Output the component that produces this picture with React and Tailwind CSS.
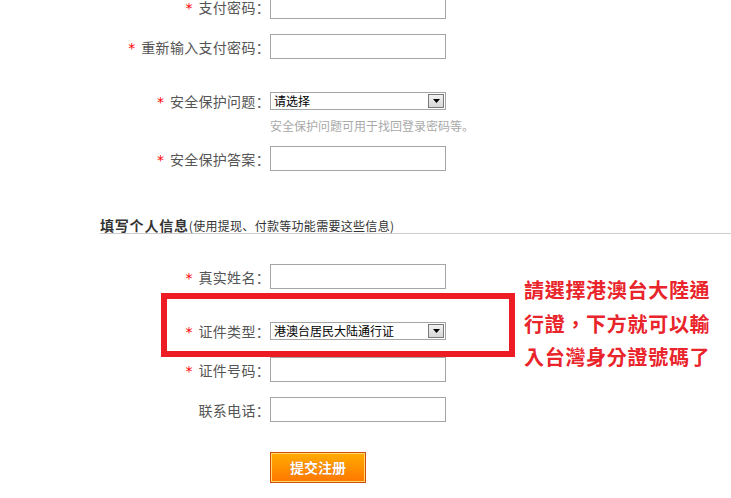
import React from "react";

const FONT = { fontFamily: '"Noto Sans CJK SC", "Noto Sans", sans-serif' };

function Label({ text, req = true }) {
  return (
    <div className="w-[270px] flex justify-end items-center text-[14px] leading-[18px] text-[#555]">
      {req && <span className="text-[#ff0000] mr-[6px] relative top-[1px]" style={{ fontFamily: '"DejaVu Sans", sans-serif' }}>*</span>}
      <span className="tracking-[0.3px]">{text}：</span>
    </div>
  );
}

function Input() {
  return <div className="w-[176px] h-[25px] border border-[#a5a5a5] bg-white" />;
}

function Select({ value }) {
  return (
    <div className="w-[176px] h-[18px] border border-[#a5a5a5] bg-white flex items-center">
      <div className="flex-1 pl-[3px] text-[12px] leading-[16px] text-black whitespace-nowrap">{value}</div>
      <div className="w-[16px] h-[14px] mr-[1px] border border-[#7a7a7a] bg-gradient-to-b from-[#f2f2f2] to-[#d6d6d6] flex items-center justify-center">
        <svg width="7" height="4" viewBox="0 0 7 4"><path d="M0 0h7L3.5 4z" fill="#000" /></svg>
      </div>
    </div>
  );
}

export default function App() {
  return (
    <div className="relative w-[731px] h-[498px] overflow-hidden bg-white" style={FONT}>
      <div className="flex flex-col">
        <div className="flex items-center mt-[-6px]">
          <Label text="支付密码" />
          <Input />
        </div>
        <div className="flex items-center mt-[15px]">
          <Label text="重新输入支付密码" />
          <Input />
        </div>
        <div className="flex items-center mt-[33px]">
          <Label text="安全保护问题" />
          <Select value="请选择" />
        </div>
        <div className="ml-[270px] mt-[8px] text-[12px] leading-[16px] text-[#aaaaaa]">安全保护问题可用于找回登录密码等。</div>
        <div className="flex items-center mt-[12px]">
          <Label text="安全保护答案" />
          <Input />
        </div>
        <div className="ml-[100px] mt-[48px] border-b border-[#cccccc] flex items-end h-[15px]">
          <span className="text-[14px] leading-[15px] font-bold text-[#333] tracking-[0.8px]">填写个人信息</span>
          <span className="text-[12px] leading-[14px] text-[#333] tracking-[0.3px]">(使用提现、付款等功能需要这些信息)</span>
        </div>
        <div className="flex items-center mt-[30px]">
          <Label text="真实姓名" />
          <Input />
        </div>
        <div className="flex items-center mt-[33px]">
          <Label text="证件类型" />
          <Select value="港澳台居民大陆通行证" />
        </div>
        <div className="flex items-center mt-[17px]">
          <Label text="证件号码" />
          <Input />
        </div>
        <div className="flex items-center mt-[15px]">
          <Label text="联系电话" req={false} />
          <Input />
        </div>
        <div className="ml-[270px] mt-[30px] w-[96px] h-[31px] border border-[#cf4f0a]">
          <div className="w-full h-full border border-[#ffd970] bg-gradient-to-b from-[#ffaa00] to-[#ff7800] flex items-center justify-center text-white font-bold text-[14px] [text-shadow:0_0_1px_#c85a00]">
            提交注册
          </div>
        </div>
      </div>

      <div className="absolute left-[161px] top-[293px] w-[354px] h-[64px] border-[6px] border-[#ed1c24]" />
      <div
        className="absolute left-[524px] top-[273px] text-[20px] leading-[33.5px] font-bold text-[#e9242b] tracking-[0.7px] whitespace-nowrap"
        style={{ fontFamily: '"Noto Sans CJK TC", "Noto Sans CJK SC", sans-serif' }}
      >
        <div>請選擇港澳台大陸通</div>
        <div>行證，下方就可以輸</div>
        <div>入台灣身分證號碼了</div>
      </div>
    </div>
  );
}
